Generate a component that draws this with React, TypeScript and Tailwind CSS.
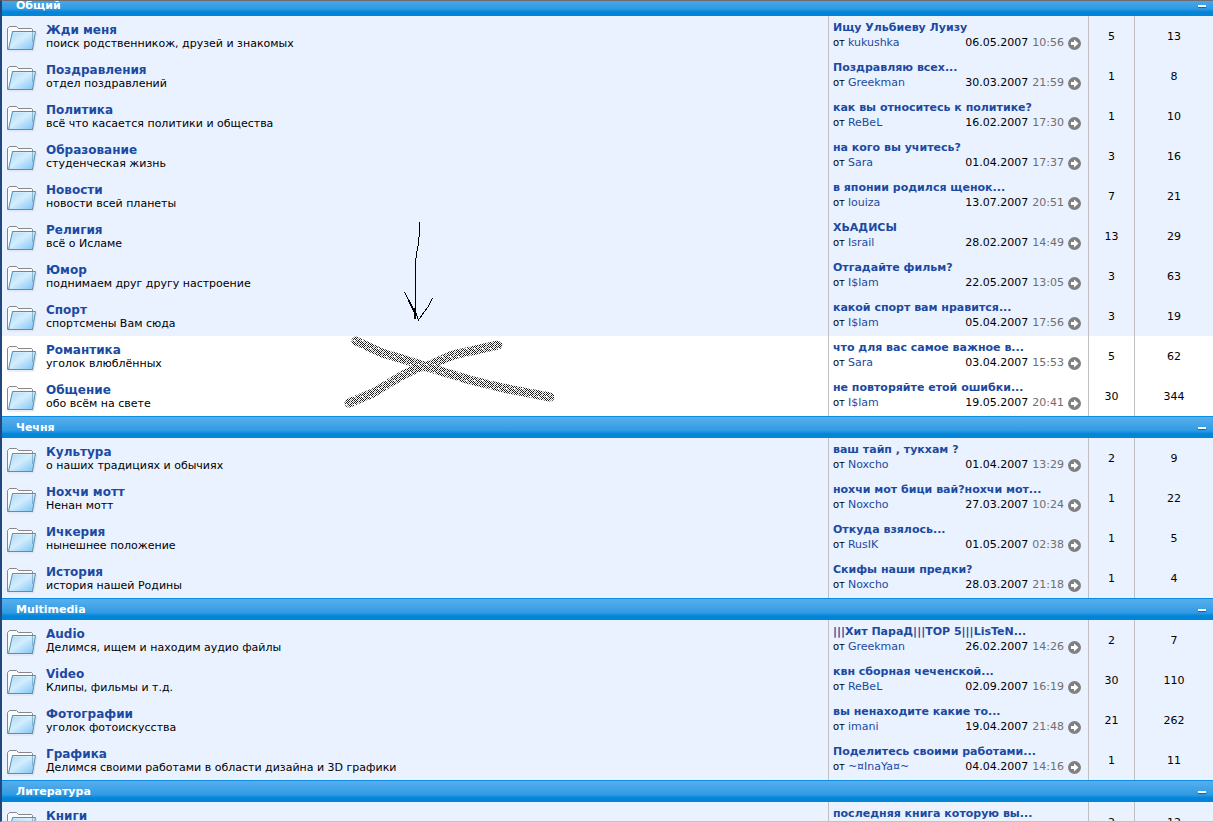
import { useState } from 'react';

interface Forum {
  name: string;
  description: string;
  post: string;
  author: string;
  date: string;
  time: string;
  topics: number;
  replies: number;
  plain?: boolean;
}

interface Category {
  title: string;
  forums: Forum[];
}

function forum(
  name: string,
  description: string,
  post: string,
  author: string,
  date: string,
  time: string,
  topics: number,
  replies: number,
  plain = false,
): Forum {
  return { name, description, post, author, date, time, topics, replies, plain };
}

const categories: Category[] = [
  {
    title: 'Общий',
    forums: [
      forum('Жди меня', 'поиск родственникож, друзей и знакомых', 'Ищу Ульбиеву Луизу', 'kukushka', '06.05.2007', '10:56', 5, 13),
      forum('Поздравления', 'отдел поздравлений', 'Поздравляю всех...', 'Greekman', '30.03.2007', '21:59', 1, 8),
      forum('Политика', 'всё что касается политики и общества', 'как вы относитесь к политике?', 'ReBeL', '16.02.2007', '17:30', 1, 10),
      forum('Образование', 'студенческая жизнь', 'на кого вы учитесь?', 'Sara', '01.04.2007', '17:37', 3, 16),
      forum('Новости', 'новости всей планеты', 'в японии родился щенок...', 'louiza', '13.07.2007', '20:51', 7, 21),
      forum('Религия', 'всё о Исламе', 'ХЬАДИСЫ', 'Israil', '28.02.2007', '14:49', 13, 29),
      forum('Юмор', 'поднимаем друг другу настроение', 'Отгадайте фильм?', 'I$lam', '22.05.2007', '13:05', 3, 63),
      forum('Спорт', 'спортсмены Вам сюда', 'какой спорт вам нравится...', 'I$lam', '05.04.2007', '17:56', 3, 19),
      forum('Романтика', 'уголок влюблённых', 'что для вас самое важное в...', 'Sara', '03.04.2007', '15:53', 5, 62, true),
      forum('Общение', 'обо всём на свете', 'не повторяйте етой ошибки...', 'I$lam', '19.05.2007', '20:41', 30, 344, true),
    ],
  },
  {
    title: 'Чечня',
    forums: [
      forum('Культура', 'о наших традициях и обычиях', 'ваш тайп , тукхам ?', 'Noxcho', '01.04.2007', '13:29', 2, 9),
      forum('Нохчи мотт', 'Ненан мотт', 'нохчи мот бици вай?нохчи мот...', 'Noxcho', '27.03.2007', '10:24', 1, 22),
      forum('Ичкерия', 'нынешнее положение', 'Откуда взялось...', 'RusIK', '01.05.2007', '02:38', 1, 5),
      forum('История', 'история нашей Родины', 'Скифы наши предки?', 'Noxcho', '28.03.2007', '21:18', 1, 4),
    ],
  },
  {
    title: 'Multimedia',
    forums: [
      forum('Audio', 'Делимся, ищем и находим аудио файлы', '|||Хит ПараД|||TOP 5|||LisTeN...', 'Greekman', '26.02.2007', '14:26', 2, 7),
      forum('Video', 'Клипы, фильмы и т.д.', 'квн сборная чеченской...', 'ReBeL', '02.09.2007', '16:19', 30, 110),
      forum('Фотографии', 'уголок фотоискусства', 'вы ненаходите какие то...', 'imani', '19.04.2007', '21:48', 21, 262),
      forum('Графика', 'Делимся своими работами в области дизайна и 3D графики', 'Поделитесь своими работами...', '~¤InaYa¤~', '04.04.2007', '14:16', 1, 11),
    ],
  },
  {
    title: 'Литература',
    forums: [
      forum('Книги', '', 'последняя книга которую вы...', '', '', '', 2, 12),
    ],
  },
];

function FolderIcon() {
  return (
    <svg width="32" height="28" viewBox="0 0 32 28" className="shrink-0" aria-hidden="true">
      <defs>
        <linearGradient id="folder-front" x1="0" y1="0" x2="1" y2="1">
          <stop offset="0" stopColor="#a8d8f6" />
          <stop offset="0.45" stopColor="#d4edfd" />
          <stop offset="1" stopColor="#78c2f4" />
        </linearGradient>
      </defs>
      <path d="M2 27H27.500L30.500 9" fill="none" stroke="#dcdfe4" />
      <path d="M1.500 25.500V4.500L3.500 2.500H10.500L12.500 4.500H25.500L26.500 5.500V25.500Z" fill="#fafbfc" stroke="#85878a" />
      <path d="M6.500 7.500H29.500L26.500 25.500H2.500Z" fill="url(#folder-front)" stroke="#5590b4" />
      <path d="M7.500 8.500H28" fill="none" stroke="#e2f3fe" strokeOpacity="0.5" />
      <path d="M26.500 8V18" stroke="#5288a8" strokeOpacity="0.5" />
    </svg>
  );
}

function LastPostIcon() {
  return (
    <svg width="13" height="13" viewBox="0 0 13 13" aria-hidden="true">
      <circle cx="6.5" cy="6.5" r="6.5" fill="#808080" />
      <path d="M3 5H6V2.500L10.500 6.500L6 10.500V8H3Z" fill="#fff" />
    </svg>
  );
}

// hand-drawn arrow and sprayed cross over the two white rows
function Scribble() {
  return (
    <svg
      width="240"
      height="210"
      viewBox="0 0 240 210"
      className="pointer-events-none absolute left-[328px] top-[209px]"
      aria-hidden="true"
    >
      <defs>
        <pattern id="spray" width="8" height="8" patternUnits="userSpaceOnUse">
          <path
            shapeRendering="crispEdges"
            d="M0 0h1v1h-1zM2 0h1v1h-1zM6 0h1v1h-1zM1 1h1v1h-1zM5 1h1v1h-1zM7 1h1v1h-1zM2 2h1v1h-1zM4 2h1v1h-1zM3 3h1v1h-1zM5 3h1v1h-1zM7 3h1v1h-1zM0 4h1v1h-1zM4 4h1v1h-1zM6 4h1v1h-1zM1 5h1v1h-1zM3 5h1v1h-1zM7 5h1v1h-1zM0 6h1v1h-1zM2 6h1v1h-1zM6 6h1v1h-1zM1 7h1v1h-1zM3 7h1v1h-1zM5 7h1v1h-1z"
            fill="#1a1a1a"
          />
          <path
            shapeRendering="crispEdges"
            d="M4 0h1v1h-1zM3 1h1v1h-1zM6 2h1v1h-1zM1 3h1v1h-1zM2 4h1v1h-1zM5 5h1v1h-1zM4 6h1v1h-1zM7 7h1v1h-1z"
            fill="#999"
          />
        </pattern>
      </defs>
      <g fill="none" stroke="#000" shapeRendering="crispEdges">
        <path d="M89.500 12V26L88.500 28V34L86.500 43V47L85.500 49V109" />
        <path d="M74.500 82L86 106M75.500 84L83.500 99L85 109M84 98L86 108" />
        <path d="M84 98L88.500 110L92 105L98 97L102.500 88" />
      </g>
      <g fill="none" stroke="url(#spray)" strokeWidth="9" strokeLinecap="round" strokeLinejoin="round">
        <path d="M26 131L52 143L76 150L97 157L140 170L173 178L220 187" />
        <path d="M19 193L43 183L73 165L88 158L100 155L123 145L168 135" />
      </g>
    </svg>
  );
}

function ForumRow({ item }: { item: Forum }) {
  return (
    <tr className={item.plain ? 'h-10 bg-white' : 'h-10 bg-[#ebf2ff]'}>
      <td className="p-0 align-top">
        <div className="flex h-10 gap-2 pl-1 pt-2">
          <FolderIcon />
          <div className="-mt-[2px]">
            <a href="#forum" className="block w-max text-[12px] leading-[16px] font-bold text-[#1b4aa0]">
              {item.name}
            </a>
            <p className="text-[11px] leading-[12px] text-black">{item.description}</p>
          </div>
        </div>
      </td>
      <td className="border-l border-[#c0c0c0] p-0 align-top">
        <div className="h-10 pl-1 pr-[7px] pt-1">
          <a href="#post" className="block text-[11px] leading-[16px] font-bold whitespace-nowrap text-[#1b4aa0]">
            {item.post}
          </a>
          {item.author && (
            <div className="flex items-center text-[11px] leading-[14px]">
              <span className="text-[10px] text-black">от</span>
              <a href="#user" className="ml-[3px] text-[#1b4aa0]">
                {item.author}
              </a>
              <span className="ml-auto text-black">{item.date}</span>
              <span className="ml-1 text-[#6e6e6e]">{item.time}</span>
              <a href="#last" aria-label="Последнее сообщение" className="ml-1">
                <LastPostIcon />
              </a>
            </div>
          )}
        </div>
      </td>
      <td className="border-l border-[#c0c0c0] p-0 pt-px text-center text-[11px] leading-[16px] text-black">
        {item.topics}
      </td>
      <td className="border-l border-[#c0c0c0] p-0 pt-px text-center text-[11px] leading-[16px] text-black">
        {item.replies}
      </td>
    </tr>
  );
}

export default function App() {
  const [closed, setClosed] = useState<string[]>([]);

  const toggle = (title: string) => {
    setClosed(closed.includes(title) ? closed.filter((t) => t !== title) : [...closed, title]);
  };

  return (
    <main className="relative h-screen overflow-hidden border-t border-b border-l-2 border-t-[#6b6b70] border-b-[#a8c8f0] border-l-[#20487c] bg-[#ebf2ff] font-['Verdana','DejaVu_Sans',sans-serif]">
      <table className="-mt-[7px] w-full table-fixed border-separate border-spacing-0">
        <colgroup>
          <col />
          <col className="w-[260px]" />
          <col className="w-[46px]" />
          <col className="w-[79px]" />
        </colgroup>
        {categories.map((category) => (
          <tbody key={category.title}>
            <tr>
              <th colSpan={4} className="p-0 text-left">
                <div className="flex h-[22px] items-center justify-between border-t border-[#0a8ee2] bg-linear-to-b from-[#57aeec] from-0% via-[#2f9be4] via-65% to-[#0085d8] to-80% pl-[14px] pr-[6px]">
                  <span className="text-[11px] leading-[16px] font-bold text-white">{category.title}</span>
                  <button
                    type="button"
                    aria-label={`Свернуть ${category.title}`}
                    onClick={() => toggle(category.title)}
                    className="flex h-4 w-[10px] items-center justify-center"
                  >
                    <span className="h-[2px] w-2 bg-white shadow-[0_1px_1px_#0068b0]" />
                  </button>
                </div>
              </th>
            </tr>
            {!closed.includes(category.title) &&
              category.forums.map((item) => <ForumRow key={item.name} item={item} />)}
          </tbody>
        ))}
      </table>
      <Scribble />
    </main>
  );
}
